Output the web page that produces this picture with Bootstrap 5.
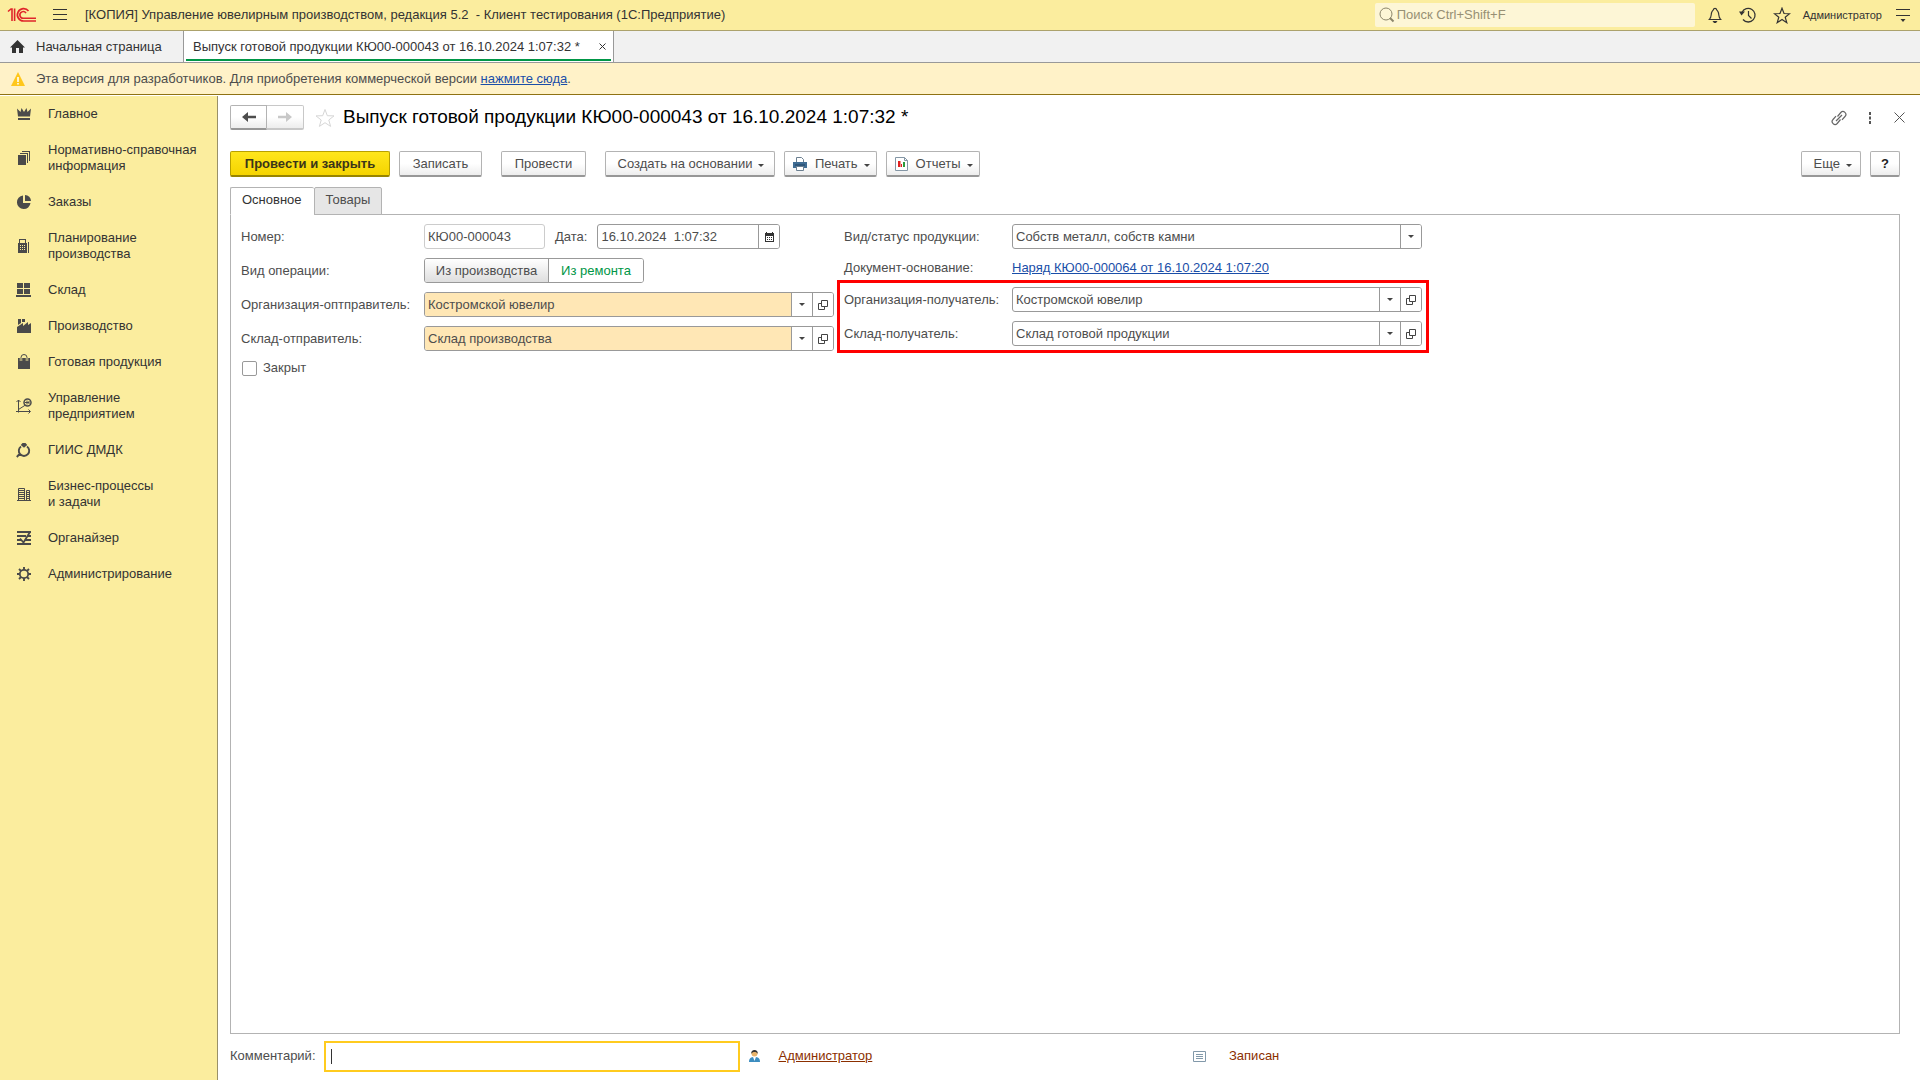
<!DOCTYPE html>
<html lang="ru">
<head>
<meta charset="utf-8">
<meta name="viewport" content="width=device-width, initial-scale=1">
<title>Выпуск готовой продукции КЮ00-000043</title>
<link href="https://cdn.jsdelivr.net/npm/bootstrap@5.3.0/dist/css/bootstrap.min.css" rel="stylesheet">
<style>
body{font-family:"Liberation Sans",Arial,sans-serif;font-size:13px;line-height:16px;color:#4d4d4d;background:#fff}
svg{display:block;flex:none}
.topbar{height:31px;background:#fbed9e;border-bottom:1px solid #aca26c;color:#333;padding:0 10px 0 7px}
.icon-btn{background:none;border:0;padding:0;color:#333;display:block}
.app-title{margin-left:18px}
.search-box{width:320px;height:24px;background:#fdf6d6;border-radius:2px;padding:0 4px;gap:2px;color:#8c866b}
.search-box input{border:0;background:none;outline:0;padding:0;color:#8c866b;width:100%}
.search-box input::placeholder{color:#979074;opacity:1}
.tools{gap:16px}
.search-box{margin-right:-4px}
.tools-user{font-size:11px;color:#333;margin:0 -2px 0 -4px}
.tabstrip{height:32px;background:#f1f1f1;border-bottom:1px solid #999;color:#333}
.tabstrip a{color:#333;text-decoration:none}
.home-tab{width:184px;padding-left:10px;gap:11px}
.open-tab{background:#fff;border:1px solid #999;border-width:0 1px;min-width:431px;margin-left:-1px;padding:0 7px 0 9px;gap:8px}
.open-tab::after{content:"";position:absolute;left:2px;right:2px;bottom:1px;height:2px;background:#009646}
.notice{height:32px;background:#fff2c8;border-bottom:1px solid #8f7213;padding-left:11px;gap:11px}
.notice a,.doc-link{color:#1a4ea8;text-decoration:underline}
.body-area{padding-top:1px}
.sidebar{width:218px;background:#fbed9e;border-right:1px solid #999068}
.sidebar a{display:flex;align-items:center;gap:16px;padding:10px 8px 10px 16px;color:#333;text-decoration:none;white-space:pre-line}
.sidebar svg{color:#4a4a4a}
.workspace{padding:9px 20px 0 12px}
.page-title{font-size:19px;line-height:24px;color:#000;margin:0;font-weight:400}
.head-row{height:25px}
.head-star{margin:0 8px 0 11px}
.head-tools{gap:22px;margin-right:-5px}
.toolbar{margin-top:21px;gap:9px}
.btn-c{font:inherit;height:26px;padding:0 12px;border:1px solid #b3b3b3;border-bottom:2px solid #979797;border-radius:2px;background:linear-gradient(#fff,#fff 50%,#ededed);color:#4d4d4d;display:flex;align-items:center;justify-content:center;line-height:16px}
.btn-c:hover{border-color:#999;background:#f4f4f4}
.btn-main{font-weight:700;color:#3b3519;border-color:#b8a000;border-bottom-color:#988500;background:linear-gradient(#ffe61c,#f5d400)}
.btn-main{min-width:160px}
.w-save{min-width:83px}
.w-post{min-width:85px;margin:0 10px}
.w-base{min-width:170px}
.btn-menu{padding:0 6px 0 8px}
.btn-c .caret{margin-left:6px;margin-top:4px}
.btn-help{width:30px;padding:0;font-weight:700;color:#222}
.caret{width:0;height:0;border:3px solid transparent;border-top-color:#444;border-bottom:0;display:inline-block}
.nav-pair .btn-c{width:37px;height:25px;padding:0;border-radius:2px 0 0 2px}
.nav-pair .btn-c+.btn-c{border-left:0;border-color:#c8c8c8;border-radius:0 2px 2px 0}
.form-tabs{margin-top:10px;margin-bottom:-1px;z-index:1}
.form-tabs button{font:inherit;height:28px;border:1px solid #b3b3b3;padding:0 11px 2px;background:#e6e6e6;color:#4d4d4d;border-radius:2px 2px 0 0}
.form-tabs button.active{background:#fff;border-bottom-color:#fff;border-right:0;color:#333;padding-right:12px}
.pane{border:1px solid #b3b3b3;padding:9px 10px}
.form-grid{max-width:1181px;display:grid;grid-template-columns:593fr 578fr;column-gap:10px;align-items:start}
.rows{display:flex;flex-direction:column;gap:9px}
.frow{display:flex;align-items:center;min-height:25px}
.frow>label:first-child,.frow>.flabel{width:183px;flex:none}
.col-right .frow>label:first-child,.col-right .frow>.flabel{width:168px}
.frow-link{min-height:31px;padding-top:7px}
.date-label{margin:0 10px}
.field{display:flex;height:25px;border:1px solid #999;border-radius:3px;background:#fff;overflow:hidden;flex:1;min-width:0}
.field input{flex:1;min-width:0;border:0;outline:0;background:none;padding:0 3px;color:#4d4d4d;line-height:16px}
.field button{width:21px;border:0;border-left:1px solid #999;background:#fff;padding:0;display:flex;align-items:center;justify-content:center;color:#333}
.field.ro{border-color:#ccc}
.field.warm input{background:#ffe7b5}
.num-field{flex:0 0 121px}
.date-field{flex:0 0 183px}
.seg{height:25px;border:1px solid #999;border-radius:3px;overflow:hidden}
.seg button{font:inherit;border:0;background:#fff;color:#009646;min-width:94px;padding:0}
.seg button:first-child{background:linear-gradient(#fff,#dedede);color:#4d4d4d;border-right:1px solid #999;min-width:124px}
.tick-row{gap:6px;padding-left:1px}
.tick{appearance:none;width:15px;height:15px;border:1px solid #999;border-radius:2px;margin:0;background:#fff}
.tick:checked{background:#009646}
.marked{border:3px solid #f00;padding:4px;margin:0 -7px}
.footer-row{height:46px;padding-bottom:2px}
.comment{width:416px;height:31px;border:2px solid #ffcb1f;outline:0;padding:0 5px;color:#4d4d4d;background:linear-gradient(#333,#333) 5px 50%/1px 15px no-repeat}
.comment:focus{background:none}
.foot-user{margin:0 19px 0 9px}
.brown{color:#8b2f00}
.state{width:707px;gap:23px}
</style>
</head>
<body>
<div class="d-flex flex-column min-vh-100">
<header class="topbar d-flex align-items-center">
  <svg width="30" height="16" viewBox="0 0 30 16" fill="none" stroke="#e0252b"><path d="M1 4.500 4 2h1v12" stroke-width="1.600"/><path d="M7.600 1.500V14" stroke-width="1.600"/><path d="M21.500 4A6.200 6.200 0 1 0 16.500 14H29" stroke-width="1.700"/><path d="M19 6.200A3.300 3.300 0 1 0 16.500 11.200H29" stroke-width="1.600"/></svg>
  <button class="icon-btn ms-3" aria-label="Меню"><svg width="14" height="12" fill="currentColor"><path d="M0 0h14v1H0zM0 5h14v1H0zM0 10h14v1H0z"/></svg></button>
  <div class="app-title text-nowrap">[КОПИЯ] Управление ювелирным производством, редакция 5.2 &nbsp;- Клиент тестирования (1С:Предприятие)</div>
  <div class="tools ms-auto d-flex align-items-center">
    <div class="search-box d-flex align-items-center">
      <svg width="16" height="16" fill="none" stroke="currentColor"><circle cx="7" cy="7" r="6"/><path d="m11 11 3.500 3.500" stroke-width="2"/></svg>
      <input type="search" placeholder="Поиск Ctrl+Shift+F" aria-label="Поиск">
    </div>
    <button class="icon-btn" aria-label="Уведомления"><svg width="16" height="16" fill="none" stroke="currentColor"><path d="M1.500 12.500h13M2.500 12C4.500 10.500 4 8 4.500 6 5 3.500 6.500 3 6.500 2.500c0-1.500 3-1.500 3 0C9.500 3 11 3.500 11.500 6c.5 2 0 4.500 2 6" stroke-width="1.200"/><path d="M5.500 14h5L9 16H7z" fill="currentColor" stroke="none"/></svg></button>
    <button class="icon-btn" aria-label="История"><svg width="18" height="16" fill="none" stroke="currentColor"><path d="M3 5.500A6.800 6.800 0 1 1 4 12.500" stroke-width="1.300"/><path d="M0 4.500h6L2.500 8.500z" fill="currentColor" stroke="none"/><path d="M9.500 4v4.500l3 3" stroke-width="1.200"/></svg></button>
    <button class="icon-btn" aria-label="Избранное"><svg width="18" height="17" fill="none" stroke="currentColor"><path d="m9 1.200 2 5.300 5.600.2-4.400 3.500 1.600 5.500L9 12.500l-4.800 3.200 1.600-5.500L1.400 6.700l5.600-.2z" stroke-width="1.200"/></svg></button>
    <span class="tools-user">Администратор</span>
    <button class="icon-btn" aria-label="Настройки"><svg width="14" height="14" fill="currentColor"><path d="M0 1h14v1H0zM0 7h14v1H0zM4.500 11h5L7 14z"/></svg></button>
  </div>
</header>
<nav class="tabstrip d-flex" aria-label="Открытые окна">
  <a href="#" class="home-tab d-flex align-items-center"><svg width="15" height="13" fill="#333"><path d="M7.500 0 15 7.500h-2V13H9V8H6v5H2V7.500H0z"/></svg>Начальная страница</a>
  <div class="open-tab position-relative d-flex align-items-center justify-content-between"><a href="#" class="text-nowrap">Выпуск готовой продукции КЮ00-000043 от 16.10.2024 1:07:32 *</a><button class="icon-btn" aria-label="Закрыть вкладку"><svg width="7" height="7" stroke="#333"><path d="m.5.5 6 6m0-6-6 6"/></svg></button></div>
</nav>
<div class="notice d-flex align-items-center">
  <svg width="14" height="14"><path d="M7 0 14 14H0z" fill="#ffc71c"/><path d="M6.200 5h1.600v5H6.200zM6.200 11h1.600v1.500H6.200z" fill="#fff"/></svg>
  <div>Эта версия для разработчиков. Для приобретения коммерческой версии <a href="#">нажмите сюда</a>.</div>
</div>
<div class="body-area d-flex flex-grow-1">
<nav class="sidebar flex-shrink-0" aria-label="Разделы">
  <a href="#"><svg width="16" height="16" fill="currentColor"><path d="M1 2.500 4.500 6 5.500 2 8 6l2.500-4 1 4L15 2.500 14 10.500H2zM2 12h12v2H2z"/></svg>Главное</a>
  <a href="#"><svg width="16" height="16" fill="currentColor"><path d="M2 5h8v10H2zM4 3h8v10h-1V4H4zM6 1h8v10h-1V2H6z"/></svg>Нормативно-справочная
информация</a>
  <a href="#"><svg width="16" height="16" fill="currentColor"><path d="M7 1.500A6.800 6.800 0 1 0 14.500 9H7zM9 1a6 6 0 0 1 6 6H9z"/></svg>Заказы</a>
  <a href="#"><svg width="16" height="16" fill="currentColor" fill-rule="evenodd"><path d="M2 5h1V1h7v4h1v10H2zM4 2v3h5V2zM4 7v1h1V7zm2 0v1h1V7zm2 0v1h1V7zM4 9v1h1V9zm2 0v1h1V9zm2 0v1h1V9zM4 11v1h1v-1zm2 0v1h1v-1zm2 0v1h1v-1zM12 4h1v11h-1z"/></svg>Планирование
производства</a>
  <a href="#"><svg width="16" height="16" fill="currentColor"><path d="M1 1h6v5H1zM8 1h6v5H8zM1 7h6v5H1zM8 7h6v5H8zM0 13h15v2H0z"/></svg>Склад</a>
  <a href="#"><svg width="16" height="16" fill="currentColor"><path d="M1 15V9l6-4v3l5-4v3l3-2v10zM2 1h3v4L2 7zM6 1h3v3L6 4z"/></svg>Производство</a>
  <a href="#"><svg width="16" height="16" fill="currentColor"><path d="M2 4h12v11H2z"/><path d="M5 7V3.500a3 3 0 0 1 6 0V7" fill="none" stroke="#fbed9e" stroke-width="2.400"/><path d="M5 7V3.500a3 3 0 0 1 6 0V7" fill="none" stroke="currentColor"/></svg>Готовая продукция</a>
  <a href="#"><svg width="16" height="16" fill="none" stroke="currentColor"><path d="M2.500 2v12.500M0 13.500h14M.5 4l2-2 2 2M12.500 11.500l2 2-2 2M2.500 11.500l7-4.500"/><circle cx="11.500" cy="4.500" r="3.500" stroke-width="1.500"/><path d="M9 4.500h4M11 2.500v4M13 3v3"/></svg>Управление
предприятием</a>
  <a href="#"><svg width="16" height="16" fill="none" stroke="currentColor"><path d="M5 4.500a5.200 5.200 0 1 0 6 0M4 11.500.8 15" stroke-width="1.900"/><path d="M8 5.800 4.800 3 6.500 1h3l1.700 2z" fill="currentColor" stroke="none"/></svg>ГИИС ДМДК</a>
  <a href="#"><svg width="16" height="16" fill="none" stroke="currentColor"><path d="M2.500 15V2.500h6V15M10.500 15V4.500h3V15M1 14.500h14M2.500 4.500h6M2.500 6.500h6M2.500 8.500h6M2.500 10.500h6M2.500 12.500h6M10.500 6.500h3M10.500 8.500h3M10.500 10.500h3M10.500 12.500h3"/></svg>Бизнес-процессы
и задачи</a>
  <a href="#"><svg width="16" height="16" fill="none" stroke="currentColor" stroke-width="2"><path d="M1 2h14M1 6h9M12 6h3M1 10h4M9 10h6M1 14h14"/><path d="m4 8.500 3.500 4L14 2" stroke-width="1.800"/></svg>Органайзер</a>
  <a href="#"><svg width="16" height="16" fill="none" stroke="currentColor"><circle cx="8" cy="8" r="4.200" stroke-width="1.800"/><path d="M8 1v3M8 12v3M1 8h3M12 8h3M3 3l2.200 2.200M10.800 10.800 13 13M13 3l-2.200 2.200M5.200 10.800 3 13" stroke-width="1.900"/></svg>Администрирование</a>
</nav>
<main class="workspace flex-grow-1 d-flex flex-column">
  <div class="head-row d-flex align-items-center">
    <div class="nav-pair d-flex">
      <button class="btn-c" aria-label="Назад"><svg width="14" height="12" fill="#4d4d4d"><path d="M0 6 6 1v3.800h8v2.400H6V11z"/></svg></button>
      <button class="btn-c" aria-label="Вперед"><svg width="14" height="12" fill="#c8c8c8"><path d="M14 6 8 1v3.800H0v2.400h8V11z"/></svg></button>
    </div>
    <button class="icon-btn head-star" aria-label="В избранное"><svg width="20" height="20" fill="none" stroke="#d6d6d6"><path d="m10 1.500 2.300 6.200 6.700.2-5.200 4.100 1.800 6.400-5.600-3.700-5.600 3.700L6.200 12 1 7.900l6.700-.2z"/></svg></button>
    <h1 class="page-title align-self-start">Выпуск готовой продукции КЮ00-000043 от 16.10.2024 1:07:32 *</h1>
    <div class="head-tools ms-auto d-flex align-items-center">
      <button class="icon-btn" aria-label="Ссылка"><svg width="16" height="16" fill="none" stroke="#666" stroke-width="1.200"><path d="m5 11 6-6M6.500 6.500 9.800 2.500a2.900 2.900 0 0 1 4.200 4L11 9.800M9.500 9.500 6.200 13.500a2.900 2.900 0 0 1-4.200-4L5 6.200"/></svg></button>
      <button class="icon-btn" aria-label="Действия"><svg width="3" height="12" fill="#555"><path d="M0 0h2v3H0zM0 4.500h2v3H0zM0 9h2v3H0z"/></svg></button>
      <button class="icon-btn" aria-label="Закрыть"><svg width="11" height="11" stroke="#555"><path d="m.5.5 10 10m0-10-10 10"/></svg></button>
    </div>
  </div>
  <div class="toolbar d-flex">
    <button class="btn-c btn-main">Провести и закрыть</button>
    <button class="btn-c w-save">Записать</button>
    <button class="btn-c w-post">Провести</button>
    <button class="btn-c btn-menu w-base">Создать на основании<span class="caret"></span></button>
    <button class="btn-c btn-menu"><svg class="me-2" width="14" height="14"><path d="M3.500 5V.5h5l2 2V5" fill="#fff" stroke="#6b7f90"/><path d="M0 5h14v6H0z" fill="#3f6c93"/><path d="M2 8h10" stroke="#1f4160"/><path d="M3.500 9.500h7v4h-7z" fill="#fff" stroke="#6b7f90"/></svg>Печать<span class="caret"></span></button>
    <button class="btn-c btn-menu"><svg class="me-2" width="13" height="14"><path d="M.5.5h9l3 3v10H.5z" fill="#fff" stroke="#8496a5"/><path d="M9.500.5v3h3" fill="none" stroke="#8496a5"/><path d="M3 4h2.500v6H3z" fill="#e02020"/><path d="M6 7h1v3H6z" fill="#e02020"/><path d="M8 5h2v5H8z" fill="#2c9a3c"/></svg>Отчеты<span class="caret"></span></button>
    <button class="btn-c ms-auto pe-2">Еще<span class="caret"></span></button>
    <button class="btn-c btn-help" aria-label="Справка">?</button>
  </div>
  <div class="form-tabs d-flex position-relative" role="tablist">
    <button class="active" role="tab" aria-selected="true">Основное</button>
    <button role="tab">Товары</button>
  </div>
  <div class="pane flex-grow-1">
   <div class="form-grid">
    <div class="rows">
      <div class="frow"><label for="num">Номер:</label>
        <div class="field ro num-field"><input id="num" value="КЮ00-000043" readonly></div>
        <label for="dt" class="date-label">Дата:</label>
        <div class="field date-field"><input id="dt" value="16.10.2024  1:07:32"><button aria-label="Календарь"><svg width="9" height="10" fill="#333" fill-rule="evenodd"><path d="M0 1h1V0h1v1h5V0h1v1h1v9H0zM1 4v5h7V4zM2 5h1v1H2zM4 5h1v1H4zM6 5h1v1H6zM2 7h1v1H2zM4 7h1v1H4zM6 7h1v1H6z"/></svg></button></div></div>
      <div class="frow"><span class="flabel">Вид операции:</span><div class="seg d-flex"><button>Из производства</button><button>Из ремонта</button></div></div>
      <div class="frow"><label for="org1">Организация-оптправитель:</label>
        <div class="field warm"><input id="org1" value="Костромской ювелир"><button aria-label="Выбрать"><span class="caret"></span></button><button aria-label="Открыть"><svg width="10" height="10" fill="none" stroke="#444"><path d="M3.500.5h6v6h-6zM3.500 3.500h-3v6h6v-3"/></svg></button></div></div>
      <div class="frow"><label for="wh1">Склад-отправитель:</label>
        <div class="field warm"><input id="wh1" value="Склад производства"><button aria-label="Выбрать"><span class="caret"></span></button><button aria-label="Открыть"><svg width="10" height="10" fill="none" stroke="#444"><path d="M3.500.5h6v6h-6zM3.500 3.500h-3v6h6v-3"/></svg></button></div></div>
      <div class="tick-row d-flex align-items-center"><input class="tick" type="checkbox" id="closed"><label for="closed">Закрыт</label></div>
    </div>
    <div class="col-right">
      <div class="frow"><label for="kind">Вид/статус продукции:</label>
        <div class="field"><input id="kind" value="Собств металл, собств камни"><button aria-label="Выбрать"><span class="caret"></span></button></div></div>
      <div class="frow frow-link"><span class="flabel">Документ-основание:</span><a class="doc-link" href="#">Наряд КЮ00-000064 от 16.10.2024 1:07:20</a></div>
      <div class="marked rows">
        <div class="frow"><label for="org2">Организация-получатель:</label>
          <div class="field"><input id="org2" value="Костромской ювелир"><button aria-label="Выбрать"><span class="caret"></span></button><button aria-label="Открыть"><svg width="10" height="10" fill="none" stroke="#444"><path d="M3.500.5h6v6h-6zM3.500 3.500h-3v6h6v-3"/></svg></button></div></div>
        <div class="frow"><label for="wh2">Склад-получатель:</label>
          <div class="field"><input id="wh2" value="Склад готовой продукции"><button aria-label="Выбрать"><span class="caret"></span></button><button aria-label="Открыть"><svg width="10" height="10" fill="none" stroke="#444"><path d="M3.500.5h6v6h-6zM3.500 3.500h-3v6h6v-3"/></svg></button></div></div>
      </div>
    </div>
   </div>
  </div>
  <div class="footer-row d-flex align-items-center">
    <label for="comment" class="me-2">Комментарий:</label>
    <input id="comment" class="comment">
    <svg class="foot-user" width="11" height="13"><path d="M0 12c0-4 2-5 5.500-5S11 8 11 12z" fill="#3c8dc0"/><path d="m4 7 1.500 4L7 7z" fill="#fff"/><circle cx="5.500" cy="3.500" r="3" fill="#e8b36a"/><path d="M2.300 4C2 1 3.500 0 5.500 0s3.500 1 3.200 4C8 2.500 7 2 5.500 2S3 2.500 2.300 4z" fill="#333"/></svg>
    <a href="#" class="brown text-decoration-underline">Администратор</a>
    <div class="state ms-auto d-flex align-items-center brown"><svg width="13" height="11"><path d="M.5.500h12v10H.5z" fill="#fff" stroke="#8299aa"/><path d="M3 3.500h7M3 5.500h7M3 7.500h7" stroke="#8299aa"/></svg>Записан</div>
  </div>
</main>
</div>
</div>
<script src="https://cdn.jsdelivr.net/npm/bootstrap@5.3.0/dist/js/bootstrap.bundle.min.js"></script>
</body>
</html>
